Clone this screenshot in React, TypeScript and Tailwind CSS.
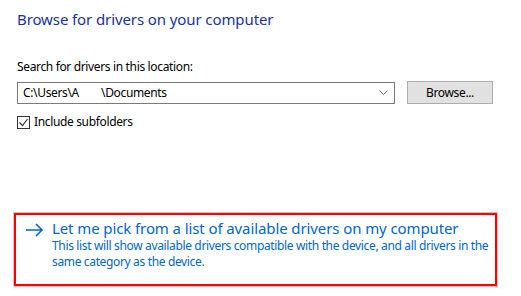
import React from 'react';

function ArrowIcon() {
  return (
    <svg width="19" height="14" viewBox="0 0 19 14" className="shrink-0">
      <path d="M1 7h16M11 1l6 6-6 6" fill="none" stroke="#0066cc" strokeWidth="1.6" />
    </svg>
  );
}

export default function App() {
  return (
    <div
      className="w-[521px] h-[296px] bg-white overflow-hidden relative"
      style={{ fontFamily: '"Segoe UI", "Noto Sans", sans-serif' }}
    >
      <div className="pl-[17px] pt-[9px]">
        <h1 className="text-[15px] leading-[20px] tracking-[-0.1px] text-[#1c3395]">Browse for drivers on your computer</h1>

        <div className="mt-[30px] text-[12px] leading-[16px] tracking-[-0.35px] text-black">Search for drivers in this location:</div>

        <div className="mt-[6px] flex items-center gap-[12px]">
          <div className="w-[378px] h-[22px] border border-[#7a7a7a] flex items-center pl-[5px] pr-[6px]">
            <span className="flex-1 text-[12px] tracking-[-0.35px] text-black whitespace-pre">C:\Users\A        \Documents</span>
            <svg width="9" height="6" viewBox="0 0 9 6">
              <path d="M0.5 0.5l4 4 4-4" fill="none" stroke="#606060" strokeWidth="1" />
            </svg>
          </div>
          <button className="w-[86px] h-[23px] bg-[#e1e1e1] border border-[#adadad] text-[12px] tracking-[-0.35px] text-black">
            Browse...
          </button>
        </div>

        <label className="mt-[10px] flex items-center gap-[4px] text-[12px] leading-[16px] tracking-[-0.35px] text-black">
          <span className="w-[13px] h-[13px] border border-[#333] flex items-center justify-center bg-white">
            <svg width="11" height="11" viewBox="0 0 11 11">
              <path d="M1.5 5.5l3 3 5-6.5" fill="none" stroke="#333" strokeWidth="1.2" />
            </svg>
          </span>
          Include subfolders
        </label>
      </div>

      <div className="absolute left-[14px] top-[213px] w-[483px] h-[73px] border-2 border-[#ff0000] shadow-[0_0_0_1px_rgba(255,120,120,0.5)]">
        <div className="flex items-start pl-[9px] pt-[4px] gap-[8px]">
          <div className="pt-[4px]">
            <ArrowIcon />
          </div>
          <div className="text-[#0066cc]">
            <div className="text-[15px] leading-[19px] tracking-[-0.1px]">Let me pick from a list of available drivers on my computer</div>
            <div className="text-[12px] leading-[16px] tracking-[-0.35px] w-[445px]">
              This list will show available drivers compatible with the device, and all drivers in the same category as the device.
            </div>
          </div>
        </div>
      </div>
    </div>
  );
}
